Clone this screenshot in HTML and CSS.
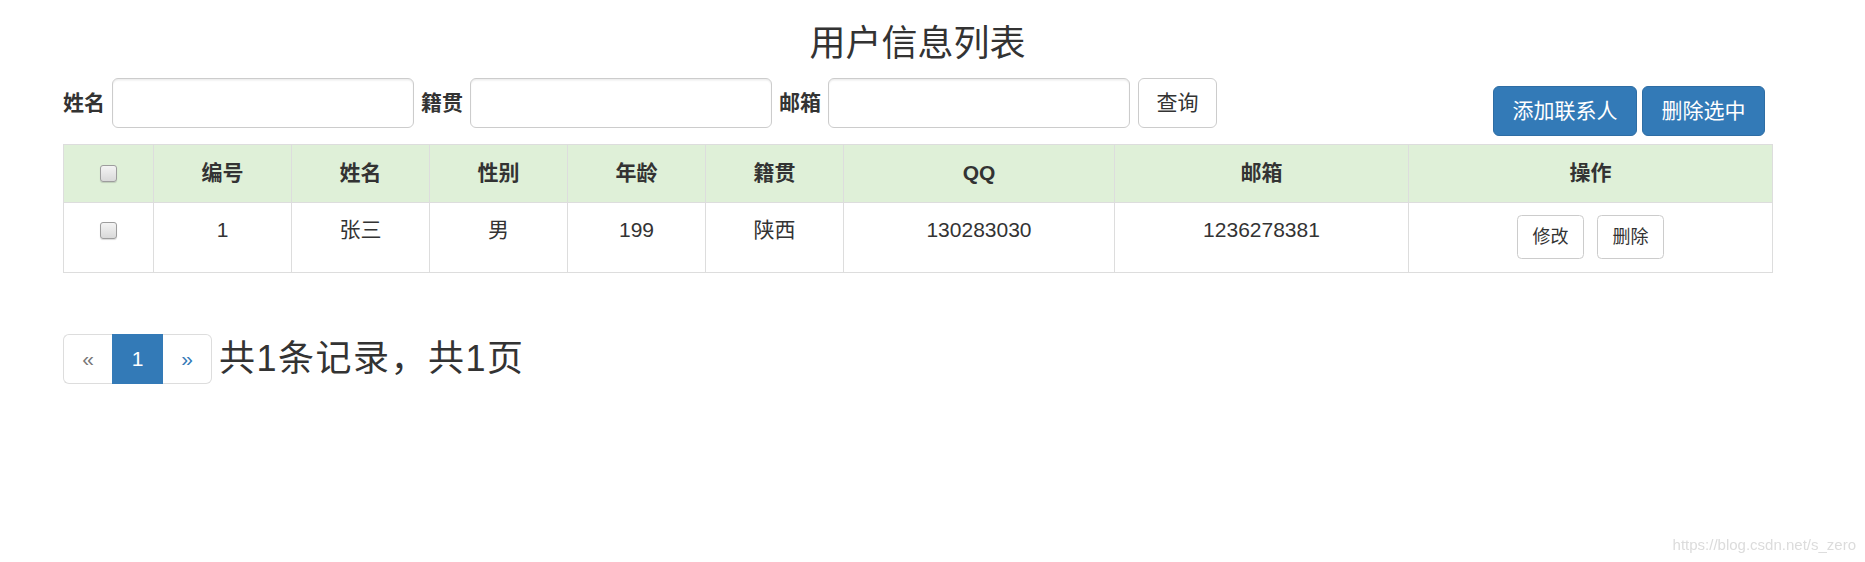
FILE: index.html
```html
<!DOCTYPE html>
<html lang="zh-CN">
<head>
<meta charset="utf-8">
<title>用户信息列表</title>
<link rel="stylesheet" href="styles.css">
</head>
<body>
<div class="container">
  <h3 class="title">用户信息列表</h3>
  <div class="toolbar">
    <form class="search">
      <label class="lbl">姓名</label><input class="field" type="text">
      <label class="lbl">籍贯</label><input class="field" type="text">
      <label class="lbl">邮箱</label><input class="field" type="text">
      <button type="button" class="btn btn-default">查询</button>
    </form>
    <div class="actions">
      <button type="button" class="btn btn-primary">添加联系人</button>
      <button type="button" class="btn btn-primary">删除选中</button>
    </div>
  </div>
  <table class="grid">
    <colgroup>
      <col class="c-cb"><col class="c-n"><col class="c-n"><col class="c-n"><col class="c-n"><col class="c-n"><col class="c-qq"><col class="c-mail"><col class="c-op">
    </colgroup>
    <thead>
      <tr class="head">
        <th><input type="checkbox" class="cb"></th>
        <th>编号</th>
        <th>姓名</th>
        <th>性别</th>
        <th>年龄</th>
        <th>籍贯</th>
        <th>QQ</th>
        <th>邮箱</th>
        <th>操作</th>
      </tr>
    </thead>
    <tbody>
      <tr>
        <td><input type="checkbox" class="cb"></td>
        <td>1</td>
        <td>张三</td>
        <td>男</td>
        <td>199</td>
        <td>陕西</td>
        <td>130283030</td>
        <td>1236278381</td>
        <td><div class="ops"><button type="button" class="btn-sm">修改</button><button type="button" class="btn-sm">删除</button></div></td>
      </tr>
    </tbody>
  </table>
  <div class="footer">
    <ul class="pagination">
      <li class="pg-prev"><span>&laquo;</span></li>
      <li class="pg-active"><span>1</span></li>
      <li class="pg-next"><span>&raquo;</span></li>
    </ul>
    <span class="summary">共1条记录，共1页</span>
  </div>
</div>
<div class="watermark">https://blog.csdn.net/s_zero</div>
</body>
</html>
```
FILE: styles.css
```css
html, body {
  margin: 0;
  padding: 0;
  background: #fff;
}
body {
  padding-left: 63px;
  font-family: "Liberation Sans", "Noto Sans CJK SC", sans-serif;
  font-size: 21px;
  line-height: 30px;
  color: #333;
}
.container {
  width: 1709px;
}
.title {
  margin: 24px 0 14px;
  font-size: 36px;
  line-height: 40px;
  font-weight: normal;
  text-align: center;
  color: #333;
}
.toolbar {
  display: flex;
  justify-content: space-between;
  align-items: flex-start;
}
.search {
  display: flex;
  align-items: center;
  margin: 0;
}
.lbl {
  font-weight: bold;
  margin-right: 7px;
}
.field {
  width: 302px;
  height: 50px;
  box-sizing: border-box;
  margin: 0 7px 0 0;
  padding: 9px 18px;
  border: 1.5px solid #ccc;
  border-radius: 6px;
  box-shadow: inset 0 1.5px 1.5px rgba(0, 0, 0, .075);
  font: inherit;
  background: #fff;
}
.btn {
  height: 50px;
  box-sizing: border-box;
  padding: 0 18px;
  border: 1.5px solid #ccc;
  border-radius: 6px;
  font-family: inherit;
  font-size: 21px;
  line-height: 30px;
  background: #fff;
  color: #333;
  cursor: pointer;
}
.search .btn {
  margin-left: 1px;
  width: 79px;
  padding: 0;
}
.btn-primary {
  background: #337ab7;
  border-color: #2e6da4;
  color: #fff;
}
.actions {
  display: flex;
  gap: 5px;
  margin-top: 8px;
  margin-right: 7px;
}
.actions .btn:first-child { width: 144px; padding: 0; }
.actions .btn:last-child { width: 123px; padding: 0; }
.grid {
  margin-top: 8px;
  width: 1709px;
  table-layout: fixed;
  border-collapse: collapse;
  border: 1px solid #ddd;
}
.c-cb { width: 90px; }
.c-n { width: 138px; }
.c-qq { width: 271px; }
.c-mail { width: 294px; }
.c-op { width: 364px; }
.grid th, .grid td {
  border: 1px solid #ddd;
  text-align: center;
  vertical-align: top;
  line-height: 30px;
}
.grid th {
  padding: 13px 12px 14px;
  font-weight: bold;
  background: #dff0d8;
}
.grid td {
  padding: 12px 12px 13px;
}
.cb {
  -webkit-appearance: none;
  appearance: none;
  display: block;
  width: 17px;
  height: 17px;
  margin: 7px auto 0;
  box-sizing: border-box;
  border: 1px solid #9d9d9d;
  border-radius: 3px;
  background: linear-gradient(#f4f4f4, #d9d9d9);
  box-shadow: 0 1px 1px rgba(0, 0, 0, .15);
}
.ops {
  display: flex;
  justify-content: center;
  gap: 13px;
}
.btn-sm {
  height: 44px;
  width: 67px;
  box-sizing: border-box;
  padding: 0;
  border: 1.5px solid #ccc;
  border-radius: 4.5px;
  background: #fff;
  color: #333;
  font-family: inherit;
  font-size: 18px;
  line-height: 40px;
}
.footer {
  display: flex;
  align-items: center;
  margin-top: 61px;
}
.pagination {
  display: flex;
  list-style: none;
  margin: 0;
  padding: 0;
}
.pagination li span {
  display: flex;
  align-items: center;
  justify-content: center;
  height: 50px;
  box-sizing: border-box;
  border: 1.5px solid #ddd;
  color: #337ab7;
  font-size: 21px;
  background: #fff;
}
.pg-prev span {
  width: 49px;
  border-radius: 6px 0 0 6px;
  border-right: 0 !important;
  color: #777 !important;
}
.pg-active span {
  width: 51px;
  background: #337ab7 !important;
  border-color: #337ab7 !important;
  color: #fff !important;
}
.pg-next span {
  width: 49px;
  border-left: 0 !important;
  border-radius: 0 6px 6px 0;
}
.summary {
  margin-left: 7px;
  font-size: 36px;
  line-height: 50px;
  letter-spacing: 1.5px;
  color: #333;
}
.watermark {
  position: fixed;
  right: 9px;
  bottom: 8px;
  font-family: "Liberation Sans", sans-serif;
  font-size: 15px;
  line-height: 18px;
  color: #dcdcdc;
}
```
